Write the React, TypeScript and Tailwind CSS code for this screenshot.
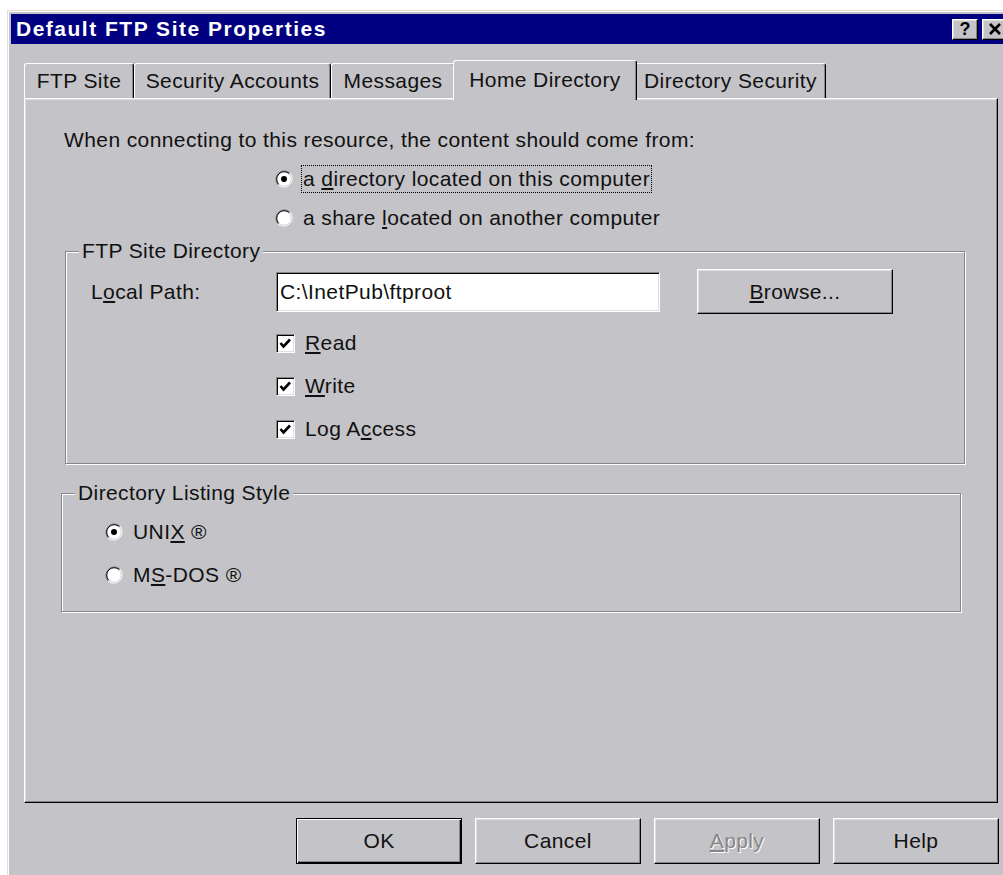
import type { ReactNode } from "react";

const face = "bg-[#c4c3c7]";
const raised =
  "border border-t-white border-l-white border-r-black border-b-black shadow-[inset_-1px_-1px_0_#868686,inset_1px_1px_0_#dfdfdf]";
const sunken =
  "border border-t-[#868686] border-l-[#868686] border-r-white border-b-white shadow-[inset_1px_1px_0_#000,inset_-1px_-1px_0_#dfdfdf]";

function Radio({ checked }: { checked?: boolean }) {
  return (
    <svg width="18" height="18" viewBox="0 0 18 18" className="shrink-0">
      <circle cx="9" cy="9" r="7" fill="#fff" />
      <path d="M3 15 A8.5 8.5 0 0 1 15 3" fill="none" stroke="#868686" />
      <path d="M3 15 A8.5 8.5 0 0 0 15 3" fill="none" stroke="#fff" />
      <path d="M3.7 14.3 A7.5 7.5 0 0 1 14.3 3.7" fill="none" stroke="#000" />
      <path d="M3.7 14.3 A7.5 7.5 0 0 0 14.3 3.7" fill="none" stroke="#dfdfdf" />
      {checked && <circle cx="9" cy="9" r="3" fill="#000" />}
    </svg>
  );
}

function Check() {
  return (
    <div className={`w-[19px] h-[19px] shrink-0 bg-white ${sunken} flex items-center justify-center`}>
      <svg width="15" height="15" viewBox="0 0 15 15">
        <polyline points="2.5,7 5.5,10.5 12,3.5" fill="none" stroke="#000" strokeWidth="2.6" />
      </svg>
    </div>
  );
}

function Group({ label, className, children }: { label: string; className: string; children: ReactNode }) {
  return (
    <div
      className={`relative border border-[#868686] shadow-[inset_1px_1px_0_#fff,1px_1px_0_#fff] ${className}`}
    >
      <span className={`absolute -top-[13px] left-[13px] px-[3px] leading-6 ${face}`}>{label}</span>
      {children}
    </div>
  );
}

function Button({ children, primary, className = "" }: { children: ReactNode; primary?: boolean; className?: string }) {
  const edge = primary
    ? "border border-black shadow-[inset_1px_1px_0_#fff,inset_-1px_-1px_0_#000,inset_-2px_-2px_0_#868686]"
    : raised;
  return (
    <div className={`flex items-center justify-center ${edge} ${className}`}>
      {children}
    </div>
  );
}

const tabs = [
  { name: "FTP Site", w: "w-[110px]" },
  { name: "Security Accounts", w: "w-[197px]" },
  { name: "Messages", w: "w-[124px]" },
  { name: "Home Directory", w: "w-[184px]", active: true },
  { name: "Directory Security", w: "w-[191px]" },
];

export default function App() {
  return (
    <div
      className="w-[1003px] h-[875px] overflow-hidden bg-white pt-[10px] pl-[7px] text-[21px] text-[#111] tracking-[0.4px]"
      style={{ fontFamily: '"Liberation Sans", Arial, sans-serif' }}
    >
      <div className={`w-[1005px] h-[900px] border-t border-l border-[#dfdfdf] ${face}`}>
        <div className="h-full border-t border-l border-white p-[2px]">
          {/* caption */}
          <div className="h-[30px] bg-[#000080] flex items-center pl-[5px] pr-[2px]">
            <span className="text-white font-bold text-[21px] tracking-[1.5px] flex-1">
              Default FTP Site Properties
            </span>
            <div className={`w-[26px] h-[21px] ${face} ${raised} flex items-center justify-center font-bold text-[18px] leading-none text-black tracking-normal`}>
              ?
            </div>
            <div className={`ml-[4px] w-[26px] h-[21px] ${face} ${raised} flex items-center justify-center`}>
              <svg width="14" height="12" viewBox="0 0 14 12">
                <path d="M2 1 L12 11 M12 1 L2 11" stroke="#000" strokeWidth="2.6" />
              </svg>
            </div>
          </div>

          <div className="pl-[13px] pt-[16px] w-[987px]">
            {/* tab strip */}
            <div className="flex items-end h-[38px]">
              {tabs.map((t) =>
                t.active ? (
                  <div
                    key={t.name}
                    className={`${t.w} h-[40px] -mb-[2px] -mx-[2px] relative z-10 ${face} border-t border-l border-white border-r border-r-black rounded-t-[3px] shadow-[inset_-1px_0_0_#868686] flex items-start justify-center pt-[3px]`}
                  >
                    {t.name}
                  </div>
                ) : (
                  <div
                    key={t.name}
                    className={`${t.w} h-[35px] border-t border-l border-white border-r border-r-black rounded-t-[3px] shadow-[inset_-1px_0_0_#868686] flex items-center justify-center`}
                  >
                    {t.name}
                  </div>
                )
              )}
            </div>

            {/* page */}
            <div className={`w-[974px] h-[705px] ${raised} pl-[39px] pt-[29px]`}>
              <div className="leading-6">When connecting to this resource, the content should come from:</div>

              <div className="pl-[211px] mt-[13px] flex flex-col gap-[11px]">
                <div className="h-[28px] flex items-center gap-[8px]">
                  <Radio checked />
                  <span className="border border-dotted border-black px-[1px] leading-[26px]">
                    a <u>d</u>irectory located on this computer
                  </span>
                </div>
                <div className="h-[28px] flex items-center gap-[9px]">
                  <Radio />
                  <span className="px-[1px]">
                    a share <u>l</u>ocated on another computer
                  </span>
                </div>
              </div>

              <Group label="FTP Site Directory" className="mt-[19px] ml-[1px] w-[900px] h-[213px] pt-[17px]">
                <div className="flex items-center pl-[25px]">
                  <span className="w-[185px]">
                    L<u>o</u>cal Path:
                  </span>
                  <div className={`w-[384px] h-[40px] bg-white ${sunken} flex items-center pl-[3px]`}>
                    C:\InetPub\ftproot
                  </div>
                  <Button className="ml-[37px] w-[196px] h-[45px]">
                    <span>
                      <u>B</u>rowse...
                    </span>
                  </Button>
                </div>
                <div className="pl-[210px] mt-[17px] flex flex-col gap-[19px]">
                  <div className="h-[24px] flex items-center gap-[10px]">
                    <Check />
                    <span>
                      <u>R</u>ead
                    </span>
                  </div>
                  <div className="h-[24px] flex items-center gap-[10px]">
                    <Check />
                    <span>
                      <u>W</u>rite
                    </span>
                  </div>
                  <div className="h-[24px] flex items-center gap-[10px]">
                    <Check />
                    <span>
                      Log A<u>c</u>cess
                    </span>
                  </div>
                </div>
              </Group>

              <Group label="Directory Listing Style" className="mt-[29px] -ml-[3px] w-[900px] h-[119px] pt-[24px]">
                <div className="pl-[43px] flex flex-col gap-[15px]">
                  <div className="h-[28px] flex items-center gap-[10px]">
                    <Radio checked />
                    <span>
                      UNI<u>X</u> ®
                    </span>
                  </div>
                  <div className="h-[28px] flex items-center gap-[10px]">
                    <Radio />
                    <span>
                      M<u>S</u>-DOS ®
                    </span>
                  </div>
                </div>
              </Group>
            </div>

            {/* dialog buttons */}
            <div className="mt-[15px] w-[975px] flex justify-end gap-[13px]">
              <Button primary className="w-[166px] h-[46px]">OK</Button>
              <Button className="w-[166px] h-[46px]">Cancel</Button>
              <Button className="w-[166px] h-[46px]">
                <span className="text-[#868686] [text-shadow:1px_1px_0_#fff]">
                  <u>A</u>pply
                </span>
              </Button>
              <Button className="w-[166px] h-[46px]">Help</Button>
            </div>
          </div>
        </div>
      </div>
    </div>
  );
}
